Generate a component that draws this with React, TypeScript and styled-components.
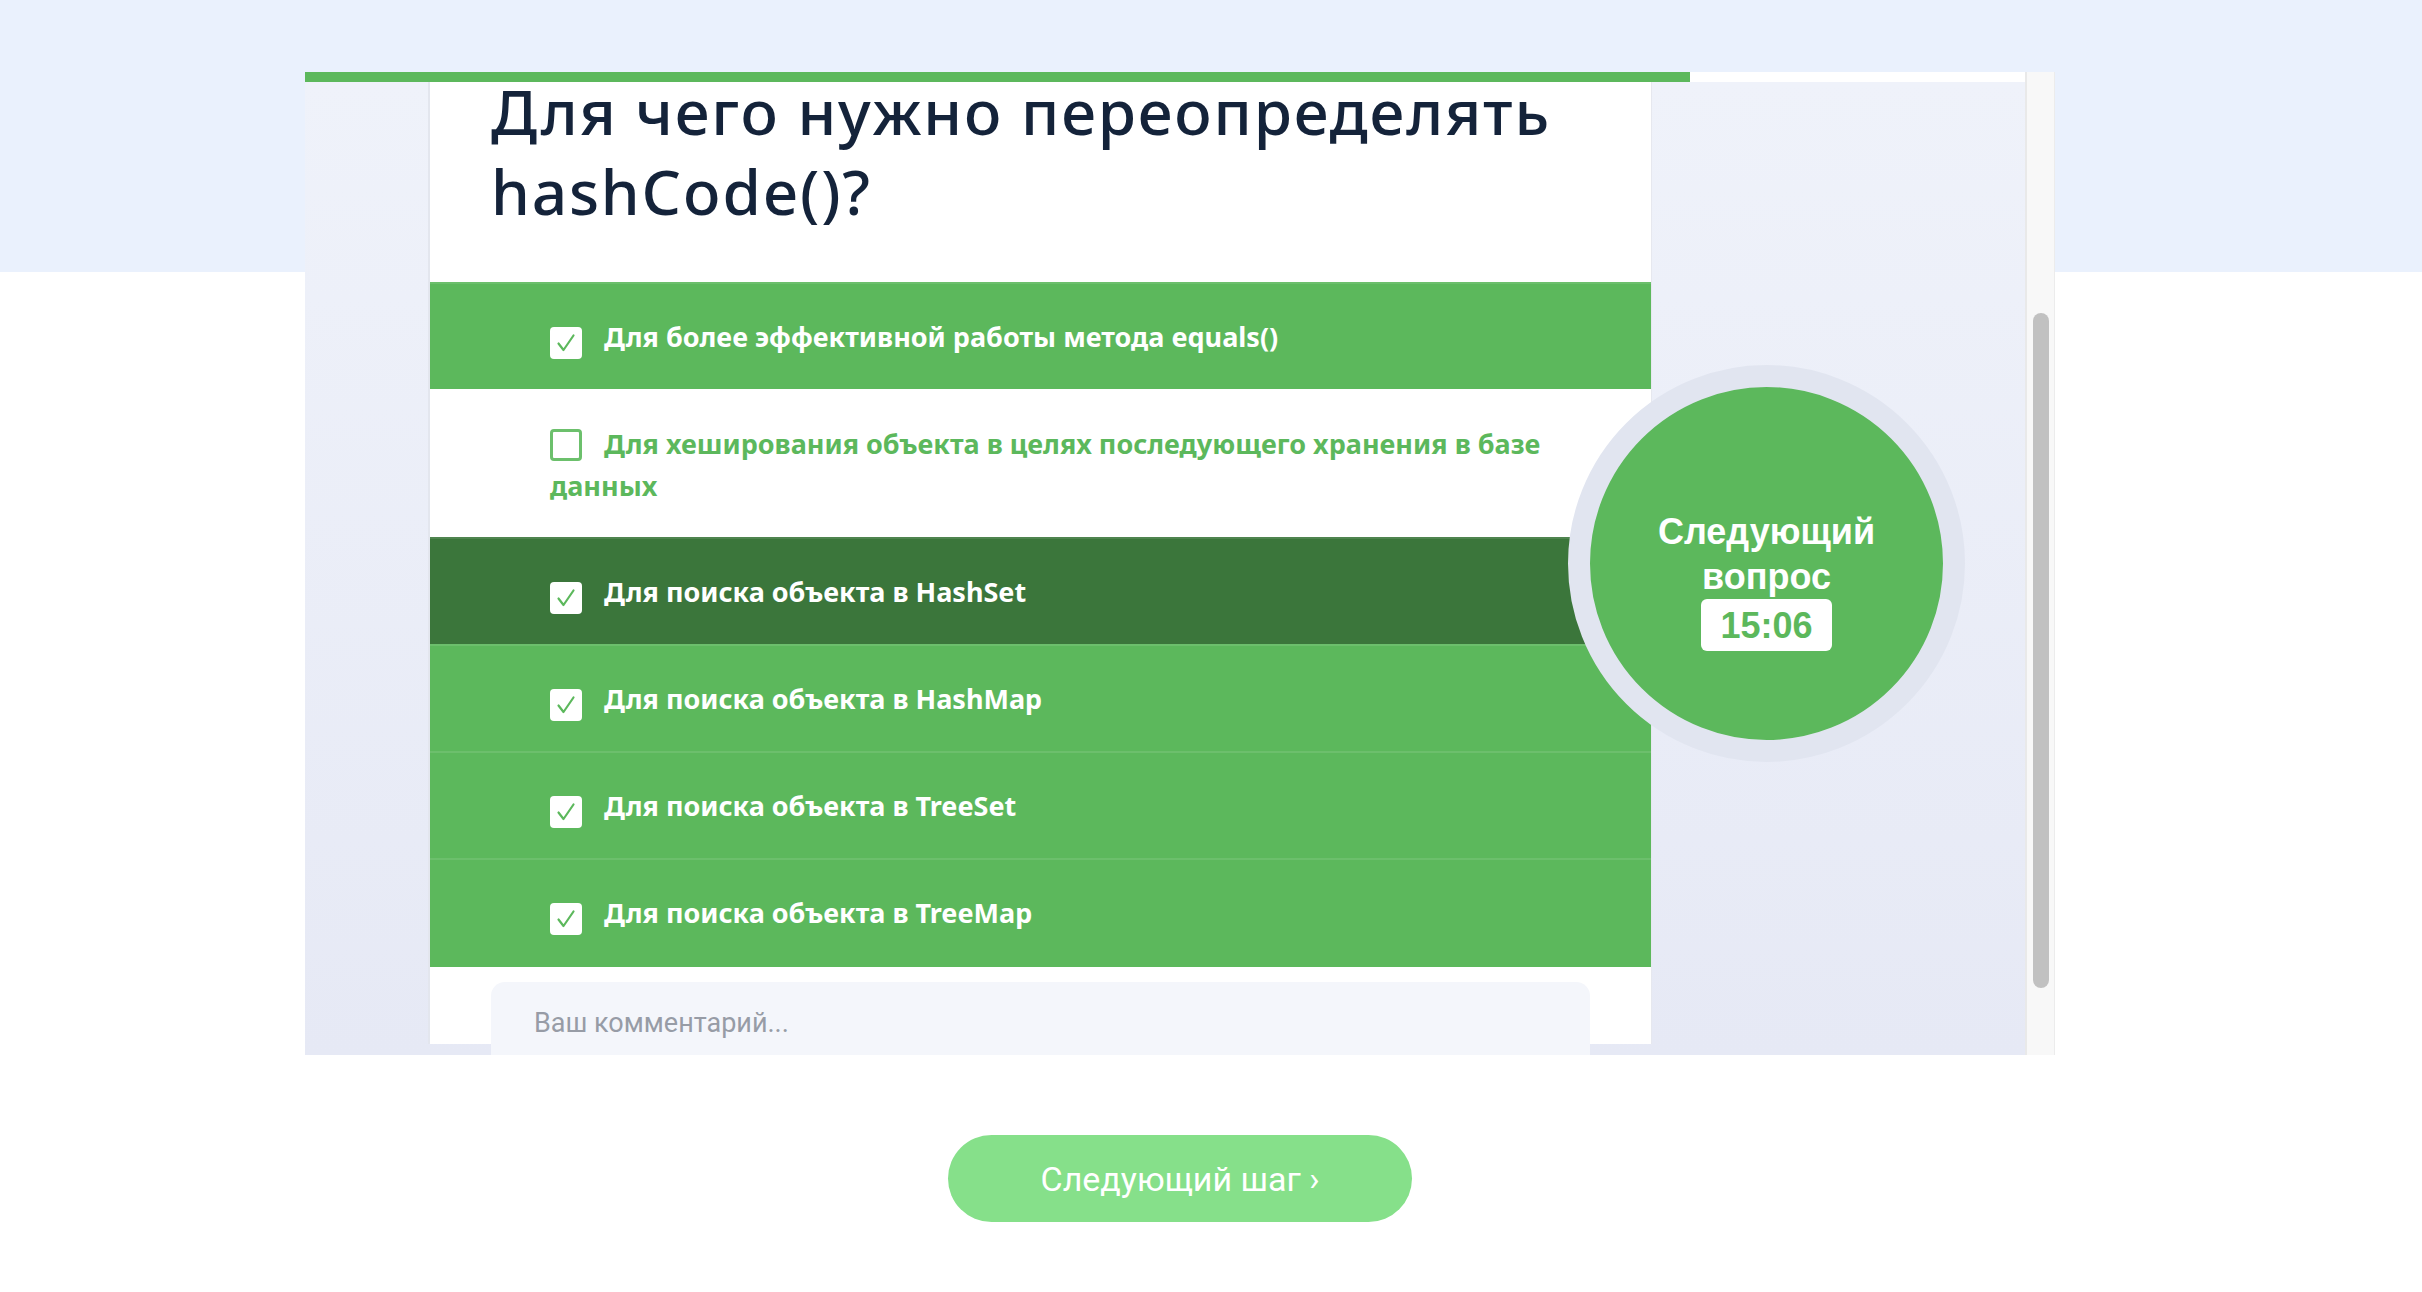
import styled, { createGlobalStyle } from "styled-components";

const GlobalStyle = createGlobalStyle`
    html, body {
        margin: 0;
        padding: 0;
    }
    body {
        width: 2422px;
        height: 1292px;
        overflow: hidden;
        background: linear-gradient(180deg, #eaf1fd 0, #eaf1fd 272px, #ffffff 272px);
        font-family: "Roboto", "Noto Sans", sans-serif;
    }
`;

const Page = styled.div`
    width: 1750px;
    margin-left: 305px;
    padding-top: 72px;
`;

const Frame = styled.div`
    display: flex;
    height: 983px;
`;

const Viewport = styled.div`
    flex: 1;
    display: flex;
    flex-direction: column;
    min-width: 0;
`;

const ProgressTrack = styled.div`
    height: 10px;
    background: #ffffff;
`;

const ProgressFill = styled.div`
    height: 100%;
    background: #5cb85c;
`;

const Stage = styled.div`
    flex: 1;
    position: relative;
    overflow: hidden;
    padding-left: 123px;
    background: linear-gradient(180deg, #eff2fa 0%, #e6e9f5 100%);
`;

const Card = styled.div`
    width: 1221px;
    height: 100%;
    background: #ffffff;
    border-left: 2px solid #e3e6ee;
    border-right: 1px solid #e6e8ef;
`;

const Title = styled.h1`
    margin: -11px 0 0;
    padding: 0 40px 53px 61px;
    font-family: "Noto Sans", sans-serif;
    font-weight: 500;
    font-size: 62px;
    line-height: 80px;
    letter-spacing: 1.8px;
    color: #14233a;
`;

const Options = styled.div`
    display: flex;
    flex-direction: column;
`;

const Option = styled.div<{ $tone: "green" | "dark" | "white" }>`
    padding: 32px 80px 32px 120px;
    font-family: "Noto Sans", sans-serif;
    font-size: 27px;
    font-weight: 700;
    line-height: 42px;
    background: ${p => (p.$tone === "green" ? "#5cb85c" : p.$tone === "dark" ? "#3b763b" : "#ffffff")};
    color: ${p => (p.$tone === "white" ? "#5cb85c" : "#ffffff")};
    border-top: 2px solid ${p => (p.$tone === "white" ? "transparent" : "rgba(255, 255, 255, 0.1)")};
    margin-top: -2px;
`;

const Box = styled.span<{ $checked: boolean }>`
    display: inline-flex;
    align-items: center;
    justify-content: center;
    box-sizing: border-box;
    width: 32px;
    height: 32px;
    margin-right: 22px;
    vertical-align: -7px;
    border-radius: 4px;
    background: #ffffff;
    border: ${p => (p.$checked ? "none" : "3px solid #6cc06c")};
`;

const Comment = styled.div`
    margin: 15px 61px 0;
    height: 140px;
    box-sizing: border-box;
    padding: 22px 43px;
    border-radius: 14px;
    background: #f4f6fb;
    font-size: 27px;
    line-height: 38px;
    color: #979ca6;
`;

const NextBubble = styled.div`
    position: absolute;
    left: 1263px;
    top: 283px;
    width: 397px;
    height: 397px;
    box-sizing: border-box;
    border-radius: 50%;
    border: 22px solid #e1e5f0;
    background: #5cb85c;
    display: flex;
    flex-direction: column;
    align-items: center;
    justify-content: center;
    padding-top: 32px;
    font-family: "Liberation Sans", Arial, sans-serif;
    font-weight: 700;
    font-size: 36px;
    line-height: 45px;
    color: #ffffff;
    text-align: center;
`;

const Timer = styled.div`
    width: 131px;
    height: 52px;
    border-radius: 6px;
    background: #ffffff;
    color: #5cb85c;
    font-size: 36px;
    line-height: 54px;
`;

const Scroll = styled.div`
    width: 27px;
    background: #f8f8f8;
    border-left: 2px solid #e9e9e9;
    border-right: 1px solid #ececec;
    padding-top: 241px;
`;

const Thumb = styled.div`
    width: 16px;
    height: 675px;
    margin-left: 6px;
    border-radius: 8px;
    background: #c1c1c1;
`;

const Footer = styled.div`
    display: flex;
    justify-content: center;
    padding-top: 80px;
`;

const NextButton = styled.button`
    width: 464px;
    height: 87px;
    border: none;
    border-radius: 44px;
    background: #86e08a;
    color: #ffffff;
    font-family: "Roboto", sans-serif;
    font-size: 34px;
    cursor: pointer;
`;

function Check({ checked }: { checked: boolean }) {
    return (
        <Box $checked={checked}>
            {checked && (
                <svg width="22" height="22" viewBox="0 0 22 22">
                    <path d="M3.5 11.5 L8.5 18 L18.5 3.5" fill="none" stroke="#5cb85c" strokeWidth="2.2" strokeLinecap="round" strokeLinejoin="round" />
                </svg>
            )}
        </Box>
    );
}

const answers: { text: string; tone: "green" | "dark" | "white"; checked: boolean }[] = [
    { text: "Для более эффективной работы метода equals()", tone: "green", checked: true },
    { text: "Для хеширования объекта в целях последующего хранения в базе данных", tone: "white", checked: false },
    { text: "Для поиска объекта в HashSet", tone: "dark", checked: true },
    { text: "Для поиска объекта в HashMap", tone: "green", checked: true },
    { text: "Для поиска объекта в TreeSet", tone: "green", checked: true },
    { text: "Для поиска объекта в TreeMap", tone: "green", checked: true },
];

function App() {
    return (
        <>
            <GlobalStyle />
            <Page>
                <Frame>
                    <Viewport>
                        <ProgressTrack>
                            <ProgressFill style={{ width: `${(1385 / 1720) * 100}%` }} />
                        </ProgressTrack>
                        <Stage>
                            <Card>
                                <Title>Для чего нужно переопределять hashCode()?</Title>
                                <Options>
                                    {answers.map(a => (
                                        <Option key={a.text} $tone={a.tone}>
                                            <Check checked={a.checked} />
                                            {a.text}
                                        </Option>
                                    ))}
                                </Options>
                                <Comment>Ваш комментарий...</Comment>
                            </Card>
                            <NextBubble>
                                Следующий
                                <br />
                                вопрос
                                <Timer>15:06</Timer>
                            </NextBubble>
                        </Stage>
                    </Viewport>
                    <Scroll>
                        <Thumb />
                    </Scroll>
                </Frame>
                <Footer>
                    <NextButton>Следующий шаг ›</NextButton>
                </Footer>
            </Page>
        </>
    );
}

export default App;
